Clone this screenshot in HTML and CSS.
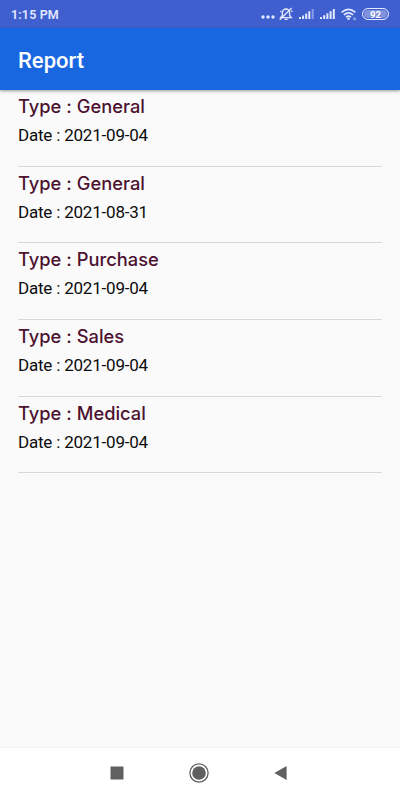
FILE: index.html
```html
<!DOCTYPE html>
<html lang="en">
<head>
    <meta charset="UTF-8">
    <meta name="viewport" content="width=device-width, initial-scale=1.0">
    <title>Report</title>
    <link rel="stylesheet" href="styles.css">
</head>
<body>
    <div class="status-bar">
        <span class="time">1:15 PM</span>
        <div class="status-icons">
            <svg class="dots" width="14" height="16" viewBox="0 0 14 16">
                <circle cx="2" cy="11" r="1.7"/>
                <circle cx="7" cy="11" r="1.7"/>
                <circle cx="12" cy="11" r="1.7"/>
            </svg>
            <svg class="bell" width="14" height="16" viewBox="0 0 14 16">
                <path d="M1.6 11.6 L3.4 9.4 V6.5 Q3.8 3.2 7 3 Q10.2 3.2 10.6 6.5 V9.4 L12.4 11.6 Z M5.6 13.4 H8.6 M.8 13.8 L12.6 2 M11.8 5.2 H13.6 M1.2 5.5 H2.6"/>
            </svg>
            <svg class="signal" width="15" height="16" viewBox="0 0 15 16">
                <path d="M0 11h2v2H0z M3.1 9.5h2V13h-2z M6.2 7.5h2V13h-2z M9.3 5.3h2V13h-2z"/>
                <path class="weak" d="M12.7 3h2v10h-2z"/>
            </svg>
            <svg class="signal" width="15" height="16" viewBox="0 0 15 16">
                <path d="M0 11h2v2H0z M3.2 9.3h2V13h-2z M6.4 7.3h2V13h-2z M9.6 5.2h2V13h-2z M12.8 3h2v10h-2z"/>
            </svg>
            <svg class="wifi" width="16" height="16" viewBox="0 0 16 16">
                <path d="M.6 6.4 Q7.5 .2 14.4 6.4 M2.9 8.9 Q7.5 4.9 12.1 8.9 M5 11.2 Q7.5 9.2 10 11.2"/>
                <circle cx="7.5" cy="12.8" r="1.3"/>
                <circle class="weak" cx="13.6" cy="12.8" r="1.6"/>
            </svg>
            <span class="battery">92</span>
        </div>
    </div>

    <header class="toolbar">
        <h1>Report</h1>
    </header>

    <main class="report-list">
        <div class="report">
            <h2><span>Type :</span> <span>General</span></h2>
            <p>Date : 2021-09-04</p>
        </div>
        <div class="report">
            <h2><span>Type :</span> <span>General</span></h2>
            <p>Date : 2021-08-31</p>
        </div>
        <div class="report">
            <h2><span>Type :</span> <span>Purchase</span></h2>
            <p>Date : 2021-09-04</p>
        </div>
        <div class="report">
            <h2><span>Type :</span> <span>Sales</span></h2>
            <p>Date : 2021-09-04</p>
        </div>
        <div class="report">
            <h2><span>Type :</span> <span>Medical</span></h2>
            <p>Date : 2021-09-04</p>
        </div>
    </main>

    <nav class="nav-bar">
        <svg width="20" height="20" viewBox="0 0 20 20"><path d="M3.5 3.5h13v13h-13z"/></svg>
        <svg width="20" height="20" viewBox="0 0 20 20">
            <circle class="ring" cx="10" cy="10" r="9.1"/>
            <circle cx="10" cy="10" r="6.8"/>
        </svg>
        <svg width="20" height="20" viewBox="0 0 20 20"><path d="M3.4 10 L15.6 3 V17 Z"/></svg>
    </nav>
</body>
</html>
```

FILE: styles.css
```css
*{
    margin: 0;
    padding: 0;
    box-sizing: border-box;
}
body{
    height: 100vh;
    display: flex;
    flex-direction: column;
    background-color: #fafafa;
    font-family: Roboto, "Liberation Sans", sans-serif;
    overflow: hidden;
}
.status-bar{
    height: 28px;
    display: flex;
    align-items: center;
    justify-content: space-between;
    padding: 0 11px;
    background-color: #3f5fcf;
    color: #e2e8ff;
}
.time{
    font-size: 12.5px;
    font-weight: 600;
    letter-spacing: 0.15px;
}
.status-icons{
    display: flex;
    align-items: center;
    fill: #e2e8ff;
}
.dots{
    margin-right: 4px;
}
.bell{
    fill: none;
    stroke: #e2e8ff;
    stroke-width: 1.3;
    margin-right: 6px;
}
.signal{
    margin-right: 6px;
}
.wifi{
    margin-right: 5px;
}
.wifi path{
    fill: none;
    stroke: #e2e8ff;
    stroke-width: 1.7;
}
.weak{
    opacity: 0.45;
}
.battery{
    width: 27px;
    height: 12px;
    border: 1px solid #e2e8ff;
    border-radius: 6px;
    background-color: #7f92de;
    box-shadow: inset 0 0 0 1px #3f5fcf;
    color: white;
    font-size: 9.5px;
    line-height: 11px;
    font-weight: bold;
    text-align: center;
}
.toolbar{
    height: 62px;
    display: flex;
    align-items: center;
    padding: 3px 18px 0;
    background-color: #1867e0;
    box-shadow: 0 1px 3px rgba(0, 0, 0, 0.4);
}
.toolbar h1{
    color: white;
    font-size: 22px;
    font-weight: 500;
}
.report-list{
    flex: 1;
    padding: 0 18px;
}
.report{
    height: 76.65px;
    padding-top: 3px;
    border-bottom: 1px solid #d8d8d8;
}
.report h2{
    display: flex;
    gap: 5px;
    color: #4c1230;
    font-family: Inter, "Open Sans", sans-serif;
    font-size: 18.3px;
    font-weight: 500;
    line-height: 26px;
}
.report p{
    color: #0c0c0c;
    font-size: 17px;
    line-height: 24px;
    letter-spacing: -0.2px;
    padding-top: 4px;
}
.nav-bar{
    height: 53px;
    display: flex;
    align-items: center;
    justify-content: center;
    gap: 62px;
    padding: 0 2px 2px 0;
    background-color: white;
    border-top: 1px solid #f4f4f4;
    fill: #606060;
}
.ring{
    fill: none;
    stroke: #606060;
    stroke-width: 1.3;
}
```
